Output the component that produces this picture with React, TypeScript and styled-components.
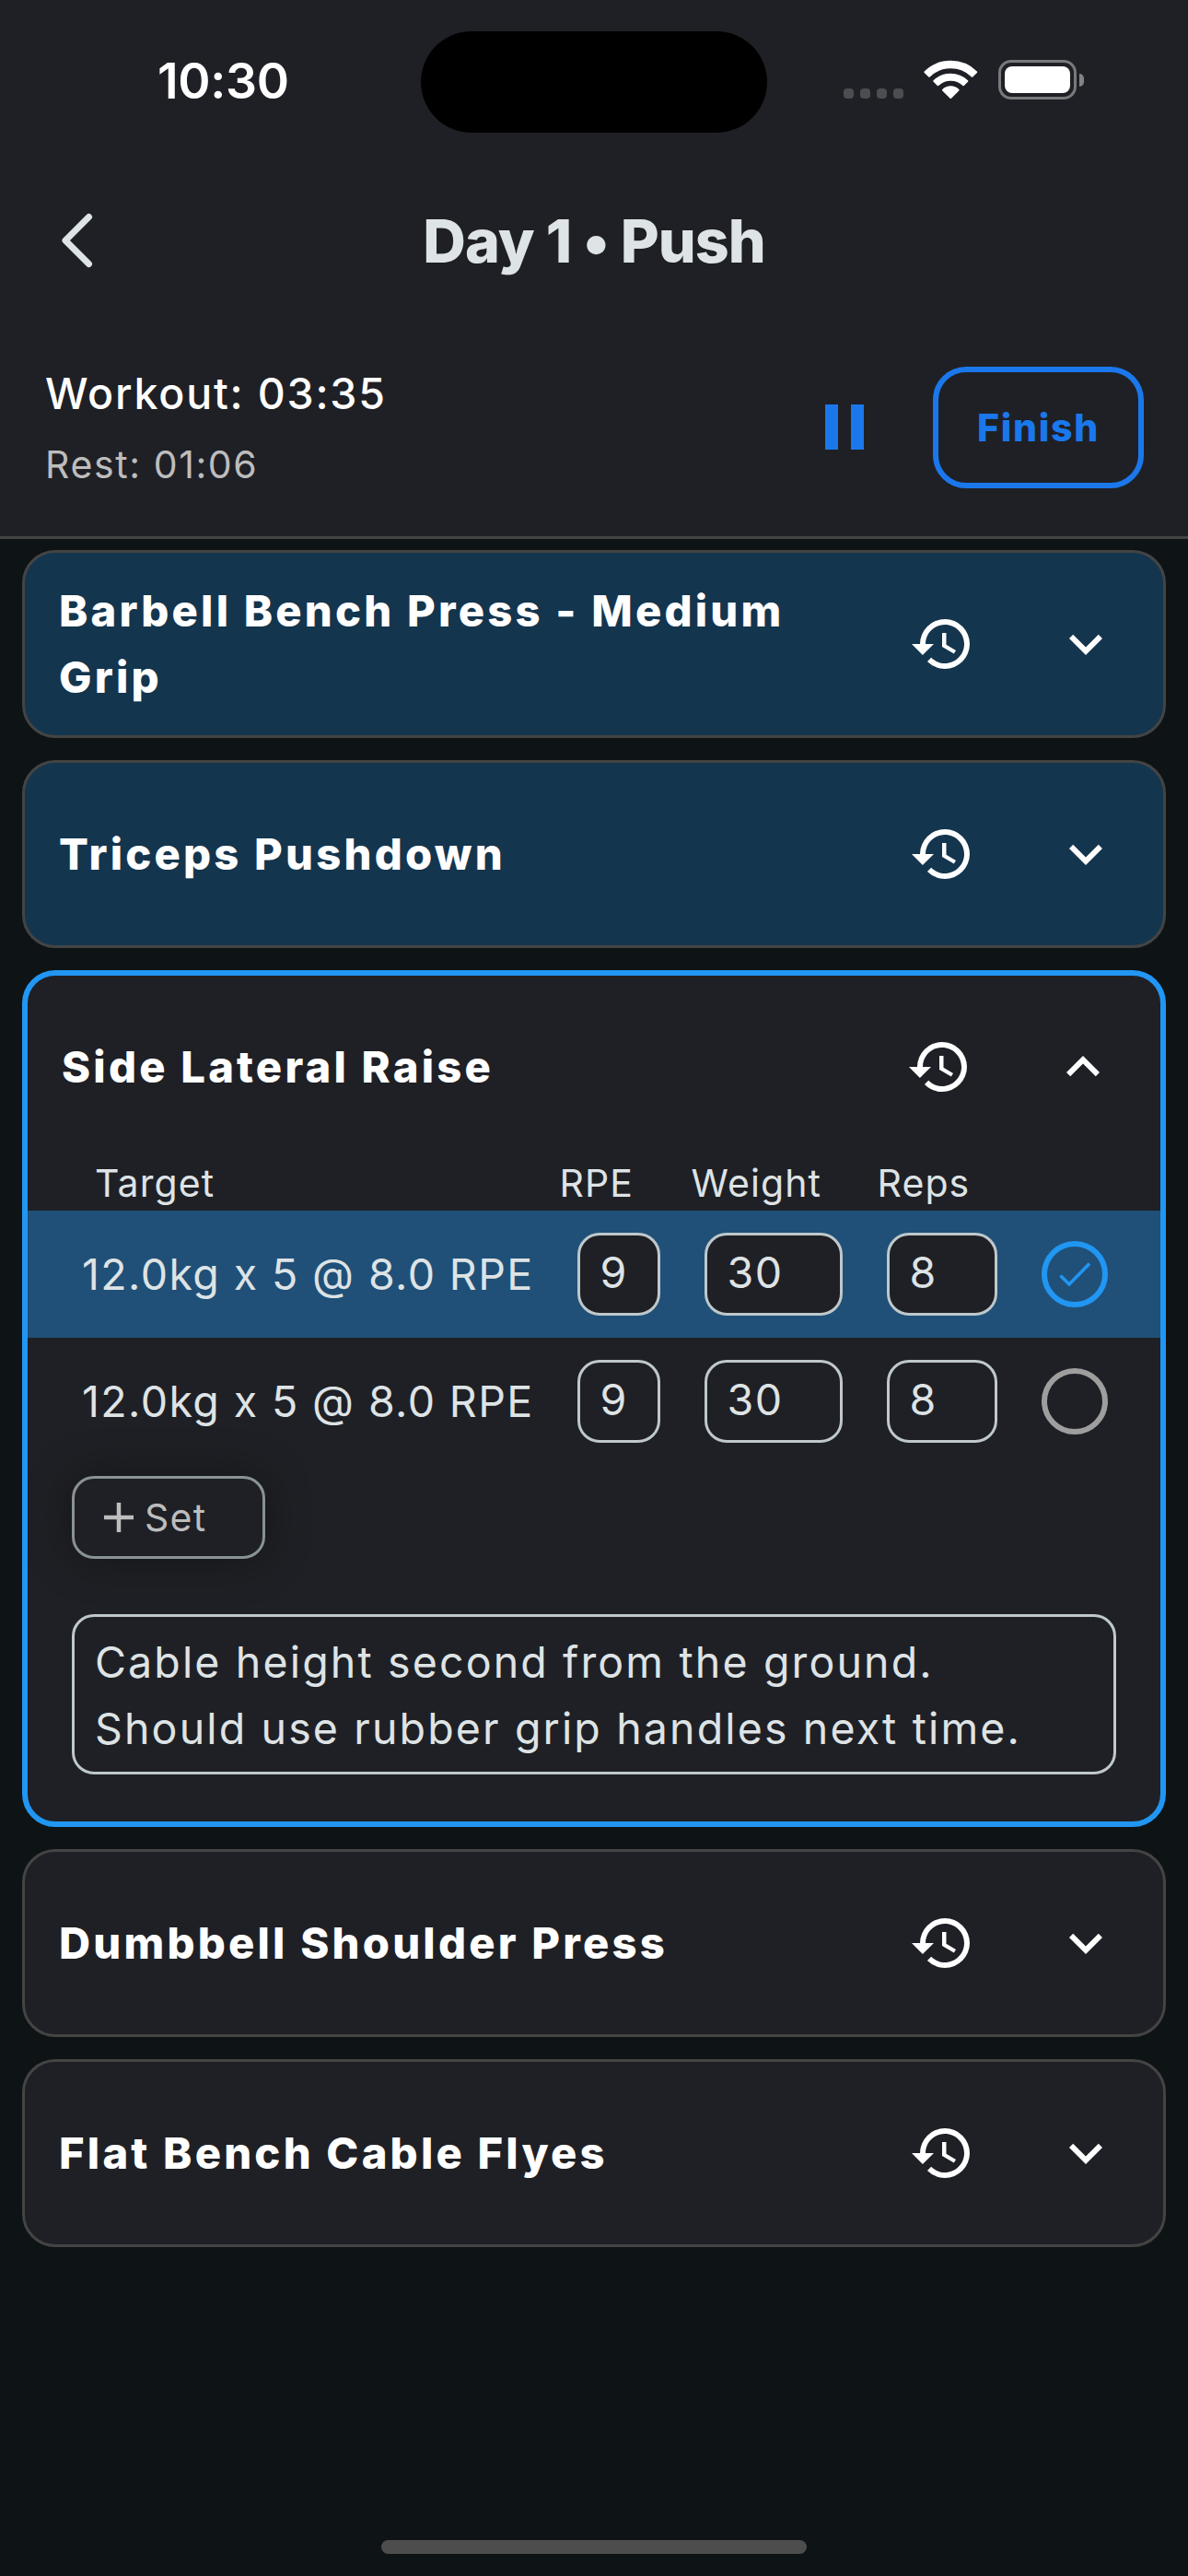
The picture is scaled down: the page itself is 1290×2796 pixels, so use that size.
import React from "react";
import styled, { createGlobalStyle } from "styled-components";

const c = {
  page: "#0e1415",
  surface: "#1f2025",
  done: "#14354e",
  rowDone: "#205078",
  line: "#444444",
  text: "#dee3e5",
  muted: "#bdbdbd",
  accent: "#1a78ec",
  active: "#2196f3",
  outline: "#bfc8ca",
  dim: "#899294",
};

const GlobalStyle = createGlobalStyle`
  *, *::before, *::after { box-sizing: border-box; }
  html, body { margin: 0; background: ${c.page}; }
  body { font-family: Inter, Roboto, "Liberation Sans", sans-serif; color: ${c.text}; }
  button { font: inherit; color: inherit; background: none; padding: 0; margin: 0; border: 0; }
  svg { display: block; flex: none; overflow: visible; }
`;

const Screen = styled.main`
  width: 1290px;
  height: 2796px;
  display: flex;
  flex-direction: column;
  overflow: hidden;
  background: ${c.page};
`;

const Header = styled.header`
  height: 585px;
  flex: none;
  background: ${c.surface};
  border-bottom: 3px solid ${c.line};
`;

const StatusBar = styled.div`
  height: 177px;
  display: grid;
  grid-template-columns: 457px 376px 1fr;
  align-items: start;
`;

const Clock = styled.div`
  padding: 56px 0 0 171px;
  font-size: 53.5px;
  line-height: 64px;
  font-weight: 600;
  letter-spacing: -0.3px;
  color: #fff;
  white-space: nowrap;
`;

const Island = styled.div`
  height: 110px;
  margin-top: 34px;
  border-radius: 55px;
  background: #000;
`;

const Indicators = styled.div`
  display: flex;
  align-items: flex-start;
  padding: 65px 0 0 83px;
`;

const Dots = styled.div`
  display: flex;
  gap: 7px;
  margin: 31px 22px 0 0;
`;

const Dot = styled.span`
  width: 11px;
  height: 11px;
  border-radius: 4px;
  background: #4c4d51;
`;

const Battery = styled.div`
  width: 85px;
  height: 43px;
  margin-left: 23px;
  padding: 4px;
  border: 3px solid #79797c;
  border-radius: 14px;
`;

const Charge = styled.div`
  height: 100%;
  border-radius: 8px;
  background: #fff;
`;

const BatteryTip = styled.div`
  width: 5px;
  height: 14px;
  margin: 15px 0 0 3px;
  border-radius: 0 5px 5px 0;
  background: #838386;
`;

const TitleBar = styled.div`
  height: 168px;
  display: grid;
  grid-template-columns: 168px 1fr 168px;
  align-items: center;
`;

const BackButton = styled.button`
  padding-left: 66px;
`;

const Title = styled.h1`
  margin: 0 0 -1px;
  font-size: 64.5px;
  line-height: 80px;
  font-weight: 800;
  letter-spacing: -1px;
  text-align: center;
  white-space: nowrap;
`;

const TimerBar = styled.div`
  height: 237px;
  display: flex;
  align-items: center;
  justify-content: space-between;
  padding: 0 48px 0 49px;
`;

const Timers = styled.div`
  display: flex;
  flex-direction: column;
  padding-top: 3px;
`;

const WorkoutTime = styled.div`
  font-size: 46.5px;
  line-height: 78px;
  font-weight: 450;
  letter-spacing: 1.8px;
  color: #fff;
`;

const RestTime = styled.div`
  font-size: 41px;
  line-height: 76px;
  letter-spacing: 1.6px;
  color: ${c.muted};
`;

const TimerActions = styled.div`
  display: flex;
  align-items: center;
  gap: 75px;
`;

const PauseButton = styled.button`
  display: flex;
  gap: 14px;
`;

const PauseBar = styled.span`
  width: 14px;
  height: 49px;
  background: ${c.accent};
`;

const FinishButton = styled.button`
  width: 229px;
  height: 132px;
  border: 6px solid ${c.accent};
  border-radius: 36px;
  font-size: 41px;
  font-weight: 800;
  letter-spacing: 1.7px;
  color: ${c.accent};
`;

const List = styled.section`
  display: flex;
  flex-direction: column;
  gap: 24px;
  padding: 12px 24px 0;
`;

type Tone = "done" | "active" | "idle";

const Card = styled.article<{ $tone: Tone }>`
  display: flex;
  flex-direction: column;
  overflow: hidden;
  border-radius: 36px;
  border: ${(p) => (p.$tone === "active" ? `6px solid ${c.active}` : `3px solid ${c.line}`)};
  background: ${(p) => (p.$tone === "done" ? c.done : c.surface)};
`;

const CardHeader = styled.div`
  height: 198px;
  display: flex;
  align-items: center;
  gap: 84px;
  padding: 0 48px 0 37px;
`;

const CardTitle = styled.h2`
  flex: 1;
  margin: 0;
  font-size: 47.2px;
  line-height: 72px;
  font-weight: 800;
  letter-spacing: 3.2px;
  color: #fff;
`;

const SetTable = styled.div`
  display: flex;
  flex-direction: column;
`;

const LabelRow = styled.div`
  height: 57px;
  display: flex;
  padding-left: 73px;
  font-size: 41px;
  line-height: 54px;
  letter-spacing: 1.1px;
  white-space: nowrap;
`;

const Label = styled.span<{ $w: number }>`
  width: ${(p) => p.$w}px;
  flex: none;
`;

const SetRow = styled.div<{ $done: boolean }>`
  height: 138px;
  display: grid;
  grid-template-columns: 489.5px 90px 150px 120px 72px;
  column-gap: 48px;
  align-items: center;
  padding-left: 59px;
  background: ${(p) => (p.$done ? c.rowDone : "transparent")};
`;

const Target = styled.span`
  font-size: 46.5px;
  line-height: 60px;
  letter-spacing: 1.4px;
  white-space: nowrap;
`;

const Field = styled.div`
  height: 90px;
  padding: 0 0 4px 22px;
  display: flex;
  align-items: center;
  border: 3px solid ${c.outline};
  border-radius: 24px;
  background: ${c.surface};
  font-size: 46.5px;
  letter-spacing: 1.6px;
`;

const Toggle = styled.button<{ $done: boolean }>`
  width: 72px;
  height: 72px;
  display: flex;
  align-items: center;
  justify-content: center;
  border: 6px solid ${(p) => (p.$done ? c.active : "#9e9e9e")};
  border-radius: 50%;
  color: ${c.active};
`;

const AddSet = styled.button`
  width: 210px;
  height: 90px;
  margin: 12px 0 0 48px;
  padding-left: 32px;
  display: flex;
  align-items: center;
  gap: 12px;
  border: 3px solid ${c.dim};
  border-radius: 24px;
  background: ${c.surface};
  box-shadow: 0 0 48px rgba(0, 0, 0, 0.35);
  font-size: 41px;
  letter-spacing: 1.3px;
  color: ${c.muted};
`;

const Notes = styled.p`
  width: 1134px;
  height: 174px;
  margin: 60px 0 51px 48px;
  padding: 13px 22px 0;
  border: 3px solid ${c.outline};
  border-radius: 24px;
  font-size: 46.5px;
  line-height: 72px;
  letter-spacing: 2.14px;
  white-space: pre-line;
`;

const HomeArea = styled.div`
  margin-top: auto;
  padding-bottom: 24px;
  display: flex;
  justify-content: center;
`;

const HomeIndicator = styled.div`
  width: 462px;
  height: 15px;
  border-radius: 8px;
  background: #4d4d4d;
`;

const BackIcon = () => (
  <svg width="36" height="60" viewBox="0 0 36 60" fill="none" stroke={c.text} strokeWidth="7" strokeLinecap="round" strokeLinejoin="round">
    <path d="M30.5 4.5 5 30 30.5 55.5" />
  </svg>
);

const WifiIcon = () => (
  <svg width="58" height="42" viewBox="0 0 58 42" fill="#fff" stroke="#fff" strokeWidth="2" strokeLinejoin="round">
    <path d="M1.4 13.2A40 40 0 0 1 57.200 13.200L52.600 17.800A33.500 33.500 0 0 0 6 17.800Z" />
    <path d="M11.300 23A26 26 0 0 1 47.300 23L43.100 27.200A20 20 0 0 0 15.500 27.200Z" />
    <path d="M21 32.700A12 12 0 0 1 37.600 32.700L29.300 41Z" />
  </svg>
);

const HistoryIcon = () => (
  <svg width="72" height="72" viewBox="0 0 24 24" fill="#fff">
    <path d="M13 3a9 9 0 0 0-9 9H1l3.890 3.890.07.14L9 12H6c0-3.870 3.130-7 7-7s7 3.130 7 7-3.130 7-7 7c-1.930 0-3.680-.79-4.940-2.060l-1.420 1.420A8.954 8.954 0 0 0 13 21a9 9 0 0 0 0-18zm-1 5v5l4.280 2.540.72-1.210-3.500-2.080V8z" />
  </svg>
);

const ExpandIcon = ({ open }: { open: boolean }) => (
  <svg width="72" height="72" viewBox="0 0 24 24" fill="#fff">
    <path d={open ? "M12 8l-6 6 1.410 1.410L12 10.830l4.590 4.580L18 14z" : "M16.590 8.590 12 13.170 7.410 8.590 6 10l6 6 6-6z"} />
  </svg>
);

const CheckIcon = () => (
  <svg width="36" height="28" viewBox="0 0 36 28" fill="none" stroke="currentColor" strokeWidth="3.6">
    <path d="M2.500 15.500 12 25 34 2.500" />
  </svg>
);

const PlusIcon = () => (
  <svg width="32" height="32" viewBox="0 0 32 32" fill="none" stroke="currentColor" strokeWidth="4.500">
    <path d="M16 0v32M0 16h32" />
  </svg>
);

const labels = [
  { text: "Target", w: 504.5 },
  { text: "RPE", w: 143 },
  { text: "Weight", w: 202 },
  { text: "Reps", w: 140 },
];

const sets = [
  { target: "12.0kg x 5 @ 8.0 RPE", values: ["9", "30", "8"], done: true },
  { target: "12.0kg x 5 @ 8.0 RPE", values: ["9", "30", "8"], done: false },
];

const exercises: { name: string; tone: Tone }[] = [
  { name: "Barbell Bench Press - Medium Grip", tone: "done" },
  { name: "Triceps Pushdown", tone: "done" },
  { name: "Side Lateral Raise", tone: "active" },
  { name: "Dumbbell Shoulder Press", tone: "idle" },
  { name: "Flat Bench Cable Flyes", tone: "idle" },
];

const SetEditor = () => (
  <SetTable>
    <LabelRow>
      {labels.map((l) => (
        <Label key={l.text} $w={l.w}>{l.text}</Label>
      ))}
    </LabelRow>
    {sets.map((s, i) => (
      <SetRow key={i} $done={s.done}>
        <Target>{s.target}</Target>
        {s.values.map((v, j) => (
          <Field key={j}>{v}</Field>
        ))}
        <Toggle $done={s.done} aria-label="Toggle set">{s.done && <CheckIcon />}</Toggle>
      </SetRow>
    ))}
    <AddSet>
      <PlusIcon />
      Set
    </AddSet>
    <Notes>{"Cable height second from the ground.\nShould use rubber grip handles next time."}</Notes>
  </SetTable>
);

export default function App() {
  return (
    <>
      <GlobalStyle />
      <Screen>
        <Header>
          <StatusBar>
            <Clock>10:30</Clock>
            <Island />
            <Indicators>
              <Dots>
                <Dot />
                <Dot />
                <Dot />
                <Dot />
              </Dots>
              <WifiIcon />
              <Battery>
                <Charge />
              </Battery>
              <BatteryTip />
            </Indicators>
          </StatusBar>
          <TitleBar>
            <BackButton aria-label="Back">
              <BackIcon />
            </BackButton>
            <Title>Day 1 • Push</Title>
          </TitleBar>
          <TimerBar>
            <Timers>
              <WorkoutTime>Workout: 03:35</WorkoutTime>
              <RestTime>Rest: 01:06</RestTime>
            </Timers>
            <TimerActions>
              <PauseButton aria-label="Pause">
                <PauseBar />
                <PauseBar />
              </PauseButton>
              <FinishButton>Finish</FinishButton>
            </TimerActions>
          </TimerBar>
        </Header>
        <List>
          {exercises.map((e) => (
            <Card key={e.name} $tone={e.tone}>
              <CardHeader>
                <CardTitle>{e.name}</CardTitle>
                <HistoryIcon />
                <ExpandIcon open={e.tone === "active"} />
              </CardHeader>
              {e.tone === "active" && <SetEditor />}
            </Card>
          ))}
        </List>
        <HomeArea>
          <HomeIndicator />
        </HomeArea>
      </Screen>
    </>
  );
}
